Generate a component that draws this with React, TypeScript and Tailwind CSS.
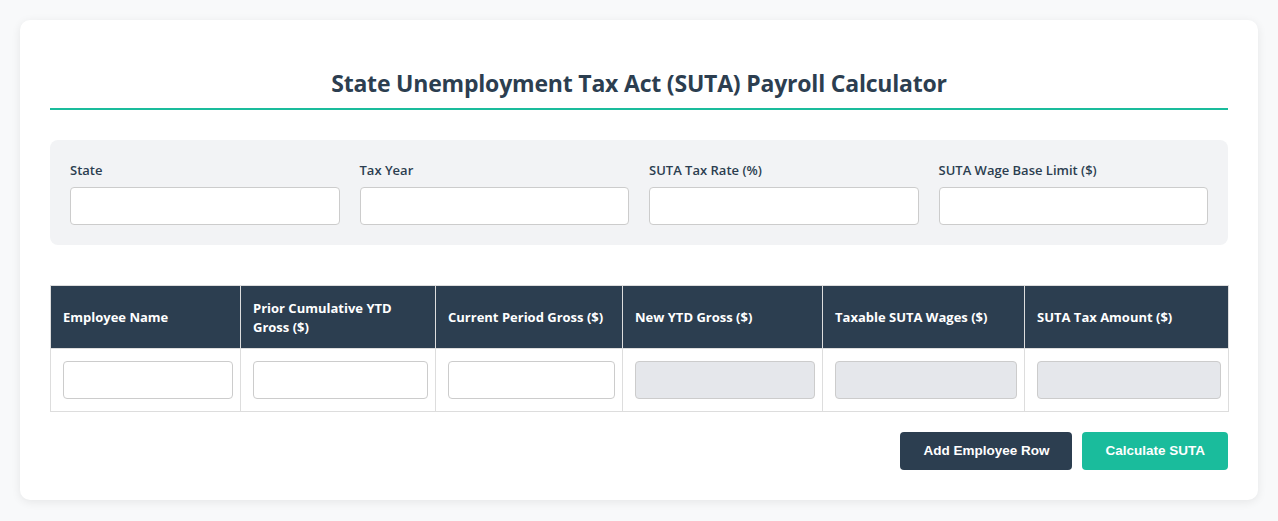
import React from 'react';

const font = { fontFamily: '"Open Sans", "Noto Sans", sans-serif' };

const App: React.FC = () => {
  const settings = ['State', 'Tax Year', 'SUTA Tax Rate (%)', 'SUTA Wage Base Limit ($)'];
  const columns = [
    { label: 'Employee Name', w: 'w-[190px]', ro: false },
    { label: 'Prior Cumulative YTD Gross ($)', w: 'w-[195px]', ro: false },
    { label: 'Current Period Gross ($)', w: 'w-[187px]', ro: false },
    { label: 'New YTD Gross ($)', w: 'w-[200px]', ro: true },
    { label: 'Taxable SUTA Wages ($)', w: 'w-[202px]', ro: true },
    { label: 'SUTA Tax Amount ($)', w: 'w-[204px]', ro: true },
  ];

  return (
    <div className="min-h-[521px] bg-[#f8f9fa] p-5" style={font}>
      <div className="rounded-[10px] bg-white px-[30px] pb-[30px] pt-[49px] shadow-[0_2px_10px_rgba(0,0,0,0.08)]">
        <h1 className="border-b-2 border-[#1abc9c] pb-[10px] text-center text-[23px] font-bold leading-[29px] tracking-[-0.2px] text-[#2c3e50]">
          State Unemployment Tax Act (SUTA) Payroll Calculator
        </h1>

        <div className="mt-[30px] grid grid-cols-4 gap-5 rounded-lg bg-[#f2f3f5] p-5">
          {settings.map((s) => (
            <div key={s} className="flex flex-col">
              <label className="mb-[7px] text-[13px] font-semibold leading-[20px] text-[#2c3e50]">{s}</label>
              <input className="h-[38px] rounded border border-[#ccc] bg-white px-2 outline-none" />
            </div>
          ))}
        </div>

        <table className="mt-10 w-full table-fixed border-collapse">
          <thead>
            <tr>
              {columns.map((c) => (
                <th
                  key={c.label}
                  className={`${c.w} h-[63px] border border-[#ddd] bg-[#2c3e50] px-3 pt-px text-left text-[13px] font-bold leading-[19px] text-white`}
                >
                  {c.label}
                </th>
              ))}
            </tr>
          </thead>
          <tbody>
            <tr>
              {columns.map((c) => (
                <td key={c.label} className="border border-[#ddd] p-3">
                  <input
                    readOnly={c.ro}
                    className={`block h-[38px] w-[calc(100%+5px)] rounded border border-[#ccc] px-2 outline-none ${c.ro ? 'bg-[#e5e7eb]' : 'bg-white'}`}
                  />
                </td>
              ))}
            </tr>
          </tbody>
        </table>

        <div className="mt-5 flex justify-end gap-[10px]">
          <button className="h-[38px] rounded bg-[#2c3e50] px-[23px] font-['Liberation_Sans',Arial,sans-serif] text-[13.5px] font-bold text-white">
            Add Employee Row
          </button>
          <button className="h-[38px] rounded bg-[#1abc9c] px-[23px] font-['Liberation_Sans',Arial,sans-serif] text-[13.5px] font-bold text-white">
            Calculate SUTA
          </button>
        </div>
      </div>
    </div>
  );
};

export default App;
